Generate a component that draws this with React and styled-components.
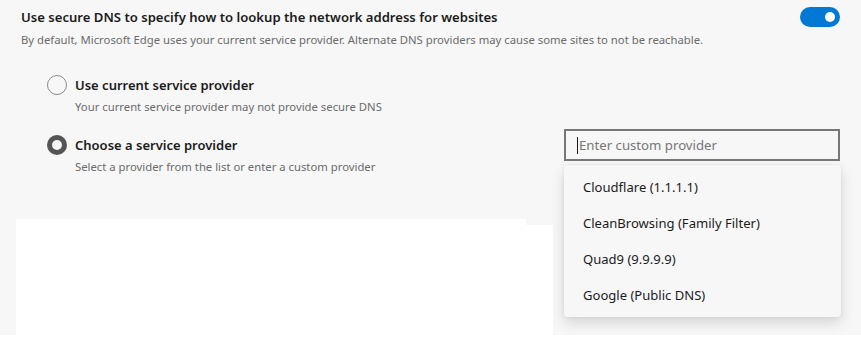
import React from "react";
import styled, { createGlobalStyle } from "styled-components";

const GlobalStyle = createGlobalStyle`
  html, body {
    margin: 0;
    padding: 0;
    background: #ffffff;
  }
  body {
    font-family: "Noto Sans", "Open Sans", sans-serif;
    color: #1b1b1b;
  }
`;

const Page = styled.div`
  width: 861px;
  height: 335px;
  background: #f7f7f7;
  position: relative;
  overflow: hidden;
`;

const Header = styled.div`
  display: flex;
  justify-content: space-between;
  padding: 7px 21px 0 21px;
`;

const HeaderText = styled.div`
  display: flex;
  flex-direction: column;
`;

const Title = styled.div`
  font-size: 13.1px;
  font-weight: 600;
  line-height: 20px;
  color: #1b1b1b;
`;

const Description = styled.div`
  font-size: 11.3px;
  line-height: 16px;
  margin-top: 5px;
  color: #6b6b6b;
`;

const Toggle = styled.div`
  width: 40px;
  height: 20px;
  border-radius: 10px;
  background: #0078d4;
  display: flex;
  align-items: center;
  justify-content: flex-end;
  padding: 0 5px;
  box-sizing: border-box;
`;

const Knob = styled.span`
  width: 10px;
  height: 10px;
  border-radius: 50%;
  background: #ffffff;
`;

const Options = styled.div`
  display: flex;
  flex-direction: column;
  gap: 20px;
  padding: 27px 21px 0 47px;
`;

const OptionRow = styled.div`
  display: flex;
  justify-content: space-between;
  align-items: flex-start;
`;

const Option = styled.div`
  display: flex;
  gap: 8px;
`;

const Radio = styled.span`
  width: 20px;
  height: 20px;
  box-sizing: border-box;
  border-radius: 50%;
  flex-shrink: 0;
  border: ${(p) => (p.checked ? "5px solid #555555" : "1px solid #8a8a8a")};
  background: ${(p) => (p.checked ? "#f7f7f7" : "transparent")};
`;

const OptionText = styled.div`
  display: flex;
  flex-direction: column;
`;

const OptionLabel = styled.div`
  font-size: 13px;
  font-weight: 600;
  line-height: 20px;
  color: #1b1b1b;
`;

const OptionHint = styled.div`
  font-size: 11.3px;
  line-height: 16px;
  margin-top: 4px;
  color: #6b6b6b;
`;

const ProviderBox = styled.div`
  position: relative;
  width: 276px;
  margin-top: -6px;
`;

const Input = styled.div`
  height: 32px;
  box-sizing: border-box;
  border: 2px solid #777777;
  background: #f7f7f7;
  display: flex;
  align-items: center;
  padding-left: 11px;
  font-size: 13.2px;
  color: #767676;
`;

const Caret = styled.span`
  width: 1px;
  height: 17px;
  background: #1b1b1b;
  margin-right: 1px;
`;

const Menu = styled.ul`
  position: absolute;
  top: 36px;
  left: 0;
  width: 277px;
  margin: 0;
  padding: 4px 0;
  list-style: none;
  background: #f7f7f7;
  border-radius: 4px;
  box-shadow: 0 6px 14px rgba(0, 0, 0, 0.14), 0 0 3px rgba(0, 0, 0, 0.08);
  z-index: 5;
`;

const MenuItem = styled.li`
  height: 36px;
  display: flex;
  align-items: center;
  padding-left: 19px;
  font-size: 13.05px;
  color: #1b1b1b;
`;

const Blank = styled.div`
  display: flex;
  align-items: flex-end;
  margin: 44px 0 0 16px;
`;

const BlankPart = styled.div`
  width: ${(p) => p.w}px;
  height: ${(p) => p.h}px;
  background: #ffffff;
`;

const providers = [
  "Cloudflare (1.1.1.1)",
  "CleanBrowsing (Family Filter)",
  "Quad9 (9.9.9.9)",
  "Google (Public DNS)",
];

export default function App() {
  return (
    <>
      <GlobalStyle />
      <Page>
        <Header>
          <HeaderText>
            <Title>Use secure DNS to specify how to lookup the network address for websites</Title>
            <Description>
              By default, Microsoft Edge uses your current service provider. Alternate DNS providers may cause some sites to not be reachable.
            </Description>
          </HeaderText>
          <Toggle>
            <Knob />
          </Toggle>
        </Header>
        <Options>
          <OptionRow>
            <Option>
              <Radio />
              <OptionText>
                <OptionLabel>Use current service provider</OptionLabel>
                <OptionHint>Your current service provider may not provide secure DNS</OptionHint>
              </OptionText>
            </Option>
          </OptionRow>
          <OptionRow>
            <Option>
              <Radio checked />
              <OptionText>
                <OptionLabel>Choose a service provider</OptionLabel>
                <OptionHint>Select a provider from the list or enter a custom provider</OptionHint>
              </OptionText>
            </Option>
            <ProviderBox>
              <Input>
                <Caret />
                Enter custom provider
              </Input>
              <Menu>
                {providers.map((p) => (
                  <MenuItem key={p}>{p}</MenuItem>
                ))}
              </Menu>
            </ProviderBox>
          </OptionRow>
        </Options>
        <Blank>
          <BlankPart w={510} h={116} />
          <BlankPart w={27} h={110} />
        </Blank>
      </Page>
    </>
  );
}
